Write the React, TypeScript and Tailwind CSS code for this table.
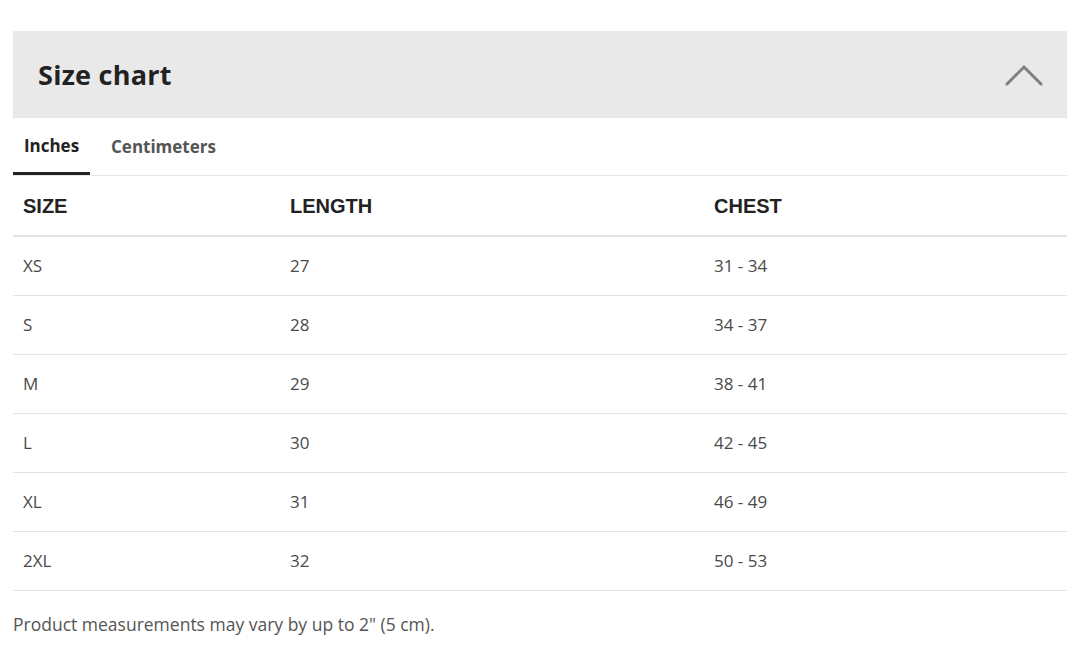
import { useState } from 'react';

type Unit = 'in' | 'cm';

const rows = [
  { size: 'XS', inches: ['27', '31 - 34'], cm: ['69', '79 - 86'] },
  { size: 'S', inches: ['28', '34 - 37'], cm: ['71', '86 - 94'] },
  { size: 'M', inches: ['29', '38 - 41'], cm: ['74', '97 - 104'] },
  { size: 'L', inches: ['30', '42 - 45'], cm: ['76', '107 - 114'] },
  { size: 'XL', inches: ['31', '46 - 49'], cm: ['79', '117 - 124'] },
  { size: '2XL', inches: ['32', '50 - 53'], cm: ['81', '127 - 135'] },
];

const body = "font-['Open_Sans','Noto_Sans',sans-serif]";

export default function App() {
  const [unit, setUnit] = useState<Unit>('in');
  const [open, setOpen] = useState(true);

  return (
    <div className={`min-h-[656px] bg-white pl-[13px] pr-[16px] pt-[31px] ${body}`}>
      {/* Header */}
      <button
        className="flex h-[87px] w-full items-center justify-between bg-[#e9e9e9] pl-[25px] pr-[24px]"
        onClick={() => setOpen(!open)}
      >
        <span className="relative top-[1px] text-[27px] font-bold tracking-[0.01em] text-[#222]">Size chart</span>
        <svg width="38" height="24" viewBox="0 0 38 24" className={open ? '' : 'rotate-180'}>
          <path d="M2 21 L19 4 L36 21" fill="none" stroke="#808080" strokeWidth="3" strokeLinecap="round" />
        </svg>
      </button>

      {open && (
        <>
          {/* Tabs */}
          <div className="flex h-[58px] border-b border-[#e6e6e6]">
            <button
              className={`h-full w-[77px] px-0 text-[17px] font-bold ${
                unit === 'in' ? 'border-b-[3px] border-[#222] text-[#222]' : 'text-[#555]'
              }`}
              onClick={() => setUnit('in')}
            >
              <span className={unit === 'in' ? 'relative top-[1px]' : ''}>Inches</span>
            </button>
            <button
              className={`ml-[11px] h-full px-[10px] text-[17px] font-bold ${
                unit === 'cm' ? 'border-b-[3px] border-[#222] text-[#222]' : 'text-[#555]'
              }`}
              onClick={() => setUnit('cm')}
            >
              Centimeters
            </button>
          </div>

          {/* Table */}
          <table className="w-full border-collapse">
            <thead>
              <tr className="h-[60px] border-b-2 border-[#e3e3e3] text-left font-['Liberation_Sans',Arial,sans-serif] text-[20px] font-bold text-[#222]">
                <th className="w-[267px] pl-[10px]">SIZE</th>
                <th className="w-[424px] pl-[10px]">LENGTH</th>
                <th className="pl-[10px]">CHEST</th>
              </tr>
            </thead>
            <tbody>
              {rows.map((r) => {
                const v = unit === 'in' ? r.inches : r.cm;
                return (
                  <tr key={r.size} className="h-[59px] border-b border-[#e3e3e3] text-[17px] text-[#4a4a4a]">
                    <td className="pl-[10px]">{r.size}</td>
                    <td className="pl-[10px]">{v[0]}</td>
                    <td className="pl-[10px]">{v[1]}</td>
                  </tr>
                );
              })}
            </tbody>
          </table>

          <p className="mt-[20px] text-[17.5px] text-[#555]">Product measurements may vary by up to 2" (5 cm).</p>
        </>
      )}
    </div>
  );
}
